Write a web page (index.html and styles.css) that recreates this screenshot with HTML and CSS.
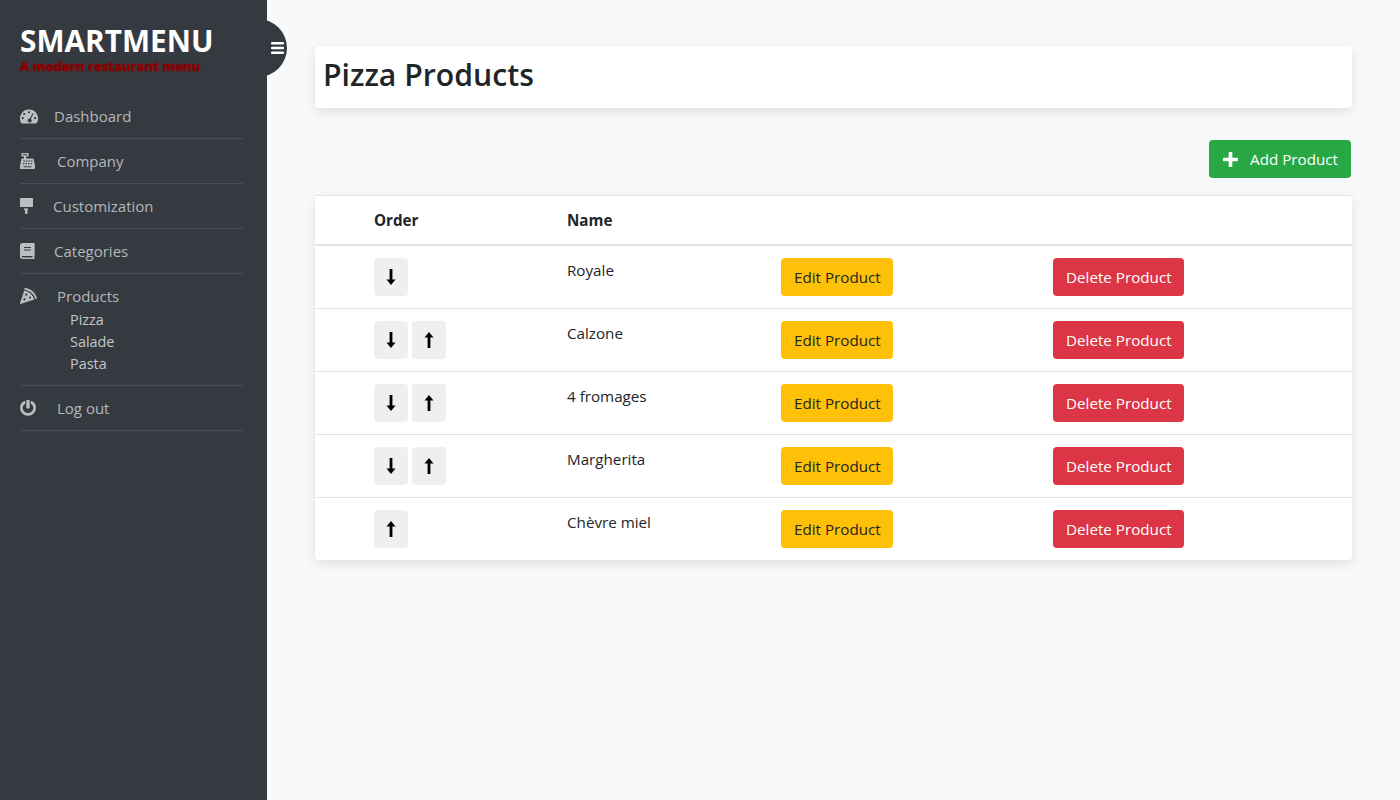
FILE: index.html
```html
<!DOCTYPE html>
<html lang="en">
<head>
    <meta charset="UTF-8">
    <meta name="viewport" content="width=device-width, initial-scale=1.0">
    <title>Pizza Products</title>
    <link rel="stylesheet" href="styles.css">
</head>
<body>
<div class="wrapper">
    <nav class="sidebar">
        <button class="sidebar-toggle">
            <svg class="toggle-icon" viewBox="0 0 13 12"><path d="M1 0h11a1 1 0 0 1 0 2.4H1A1 1 0 0 1 1 0zM1 4.8h11a1 1 0 0 1 0 2.4H1a1 1 0 0 1 0-2.4zM1 9.600h11a1 1 0 0 1 0 2.400H1a1 1 0 0 1 0-2.400z"/></svg>
        </button>
        <div class="brand">
            <h1>SMARTMENU</h1>
            <p>A modern restaurant menu</p>
        </div>
        <ul class="menu">
            <li>
                <a href="#">
                    <svg class="icon box-18" viewBox="0 0 18 16"><path fill-rule="evenodd" d="M9 1.500a9 9 0 0 0-7.800 13.500c.2.300.5.500.8.500h14c.3 0 .6-.2.800-.5A9 9 0 0 0 9 1.500zM9 3.200a1 1 0 1 1 0 2.100 1 1 0 0 1 0-2.100zM4.200 5a1 1 0 1 1 0 2.100 1 1 0 0 1 0-2.100zM2.800 9.100a1 1 0 1 1 0 2.100 1 1 0 0 1 0-2.100zM15.200 9.100a1 1 0 1 1 0 2.100 1 1 0 0 1 0-2.100zM12.600 5.200l.9.500-2.600 5.300a2 2 0 1 1-1-.4z"/></svg>
                    <span>Dashboard</span>
                </a>
            </li>
            <li>
                <a href="#">
                    <svg class="icon box-21" viewBox="0 0 21 16"><path fill-rule="evenodd" d="M1.500 0h7v3.500H6v2h6.500c.6 0 1.100.4 1.200 1l1.300 6.500v2c0 .6-.4 1-1 1H1c-.6 0-1-.4-1-1v-2L1.300 6.500c.1-.6.600-1 1.200-1H4v-2H1.500zM3 1.200v1h4v-1zM3.500 7.500v1.200h1.400V7.500zM6 7.500v1.200h1.400V7.500zM8.500 7.500v1.200h1.400V7.500zM11 7.500v1.200h1.400V7.500zM3 10v1.200h1.400V10zM5.500 10v1.200h1.400V10zM8 10v1.200h1.400V10zM10.500 10v1.200h1.400V10zM3.500 13.200v1h8v-1z"/></svg>
                    <span>Company</span>
                </a>
            </li>
            <li>
                <a href="#">
                    <svg class="icon box-17" viewBox="0 0 17 16"><path d="M1 0h11c.6 0 1 .4 1 1v7c0 .6-.4 1-1 1H1c-.6 0-1-.4-1-1V1c0-.6.4-1 1-1zM4 10.500h4v1.500H7.500v3c0 .6-.4 1-1 1h-.5c-.6 0-1-.4-1-1v-3H4z"/></svg>
                    <span>Customization</span>
                </a>
            </li>
            <li>
                <a href="#">
                    <svg class="icon box-18" viewBox="0 0 18 16"><path fill-rule="evenodd" d="M2.500 0H14c.4 0 .7.3.7.7v11.300c0 .3-.2.5-.4.600v2.200c.2.100.4.300.4.600v.3c0 .200-.2.300-.4.300H2.500A2.500 2.500 0 0 1 0 13.500v-11A2.500 2.500 0 0 1 2.500 0zM4 4v1h7V4zM4 6.500v1h7v-1zM2.400 13a1 1 0 0 0 0 1.600H12.500V13z"/></svg>
                    <span>Categories</span>
                </a>
            </li>
            <li>
                <a href="#">
                    <svg class="icon box-21" viewBox="0 0 21 16"><path fill-rule="evenodd" d="M4.800 0C10.500.3 15.500 4.500 16.800 10.100c.1.400-.1.700-.4.800l-.9.300C14.300 6.300 10.100 2.500 4.500 1.700l-.1-1.300c0-.2.200-.4.400-.4zM4.200 2.700c4.700.6 8.700 4 10.100 8.800L.6 15.900c-.4.100-.7-.2-.6-.6zM6.300 5.600a1.100 1.100 0 1 0 0 2.200 1.100 1.100 0 0 0 0-2.200zM10 8.400a1.100 1.100 0 1 0 0 2.200 1.100 1.100 0 0 0 0-2.200zM4.500 10.300a1.100 1.100 0 1 0 0 2.200 1.100 1.100 0 0 0 0-2.200z"/></svg>
                    <span>Products</span>
                </a>
                <ul class="submenu">
                    <li><a href="#">Pizza</a></li>
                    <li><a href="#">Salade</a></li>
                    <li><a href="#">Pasta</a></li>
                </ul>
            </li>
            <li>
                <a href="#">
                    <svg class="icon box-21" viewBox="0 0 21 16"><path d="M7 0h2c.4 0 .7.300.7.700v7.100c0 .4-.3.700-.7.700H7c-.4 0-.7-.3-.7-.7V.7C6.300.3 6.600 0 7 0zM11.500 1.100c3 1.100 4.500 3.700 4.500 6.700a8 8 0 0 1-16 0c0-3 1.500-5.600 4.500-6.700.4-.1.800.1.800.5v2c0 .2-.1.400-.3.500C3.500 5 2.700 6.300 2.700 7.800a5.300 5.300 0 0 0 10.600 0c0-1.500-.8-2.800-2.300-3.700-.2-.1-.3-.3-.3-.5v-2c0-.4.400-.6.800-.5z"/></svg>
                    <span>Log out</span>
                </a>
            </li>
        </ul>
    </nav>

    <main class="content">
        <div class="page-title">
            <h2>Pizza Products</h2>
        </div>
        <div class="actions">
            <a href="#" class="btn btn-success">
                <svg class="plus-icon" viewBox="0 0 14 14"><path d="M6 0h2c.4 0 .7.3.7.7v4.600h4.600c.4 0 .7.3.7.7v2c0 .4-.3.7-.7.7H8.700v4.600c0 .4-.3.7-.7.7H6c-.4 0-.7-.3-.7-.7V8.700H.7c-.4 0-.7-.3-.7-.7V6c0-.4.3-.7.7-.7h4.600V.7c0-.4.3-.7.7-.7z"/></svg>
                Add Product
            </a>
        </div>
        <div class="table-card">
            <table>
                <thead>
                    <tr>
                        <th class="col-id"></th>
                        <th class="col-order">Order</th>
                        <th class="col-name">Name</th>
                        <th class="col-edit"></th>
                        <th></th>
                    </tr>
                </thead>
                <tbody>
                    <tr>
                        <td></td>
                        <td>
                            <a href="#" class="btn-order"><svg class="arrow" viewBox="0 0 10 16"><path d="M3.600 0h2.800v10.600H9.500L5 16 .5 10.600h3.100z"/></svg></a>
                        </td>
                        <td>Royale</td>
                        <td><a href="#" class="btn btn-warning">Edit Product</a></td>
                        <td><a href="#" class="btn btn-danger">Delete Product</a></td>
                    </tr>
                    <tr>
                        <td></td>
                        <td>
                            <a href="#" class="btn-order"><svg class="arrow" viewBox="0 0 10 16"><path d="M3.600 0h2.800v10.600H9.500L5 16 .5 10.600h3.100z"/></svg></a>
                            <a href="#" class="btn-order"><svg class="arrow" viewBox="0 0 10 16"><path d="M3.600 16h2.800V5.400H9.500L5 0 .5 5.400h3.100z"/></svg></a>
                        </td>
                        <td>Calzone</td>
                        <td><a href="#" class="btn btn-warning">Edit Product</a></td>
                        <td><a href="#" class="btn btn-danger">Delete Product</a></td>
                    </tr>
                    <tr>
                        <td></td>
                        <td>
                            <a href="#" class="btn-order"><svg class="arrow" viewBox="0 0 10 16"><path d="M3.600 0h2.800v10.600H9.500L5 16 .5 10.600h3.100z"/></svg></a>
                            <a href="#" class="btn-order"><svg class="arrow" viewBox="0 0 10 16"><path d="M3.600 16h2.800V5.400H9.500L5 0 .5 5.400h3.100z"/></svg></a>
                        </td>
                        <td>4 fromages</td>
                        <td><a href="#" class="btn btn-warning">Edit Product</a></td>
                        <td><a href="#" class="btn btn-danger">Delete Product</a></td>
                    </tr>
                    <tr>
                        <td></td>
                        <td>
                            <a href="#" class="btn-order"><svg class="arrow" viewBox="0 0 10 16"><path d="M3.600 0h2.800v10.600H9.500L5 16 .5 10.600h3.100z"/></svg></a>
                            <a href="#" class="btn-order"><svg class="arrow" viewBox="0 0 10 16"><path d="M3.600 16h2.800V5.400H9.500L5 0 .5 5.400h3.100z"/></svg></a>
                        </td>
                        <td>Margherita</td>
                        <td><a href="#" class="btn btn-warning">Edit Product</a></td>
                        <td><a href="#" class="btn btn-danger">Delete Product</a></td>
                    </tr>
                    <tr>
                        <td></td>
                        <td>
                            <a href="#" class="btn-order"><svg class="arrow" viewBox="0 0 10 16"><path d="M3.600 16h2.800V5.400H9.500L5 0 .5 5.400h3.100z"/></svg></a>
                        </td>
                        <td>Chèvre miel</td>
                        <td><a href="#" class="btn btn-warning">Edit Product</a></td>
                        <td><a href="#" class="btn btn-danger">Delete Product</a></td>
                    </tr>
                </tbody>
            </table>
        </div>
    </main>
</div>
</body>
</html>
```

FILE: styles.css
```css
* { box-sizing: border-box; }
body {
    margin: 0;
    background-color: #f8f9fa;
    color: #212529;
    font-family: "Open Sans", "Noto Sans", sans-serif;
    font-size: 15.2px;
    line-height: 24px;
}
a { text-decoration: none; color: inherit; }

.wrapper {
    display: flex;
    min-height: 800px;
}

/* sidebar */
.sidebar {
    position: relative;
    flex: 0 0 267px;
    background-color: #343a40;
    padding: 20px 24px 0 20px;
    color: #b4b7b9;
    font-size: 15px;
}
.sidebar-toggle {
    position: absolute;
    top: 19px;
    left: 229px;
    width: 58px;
    height: 58px;
    padding: 0 3px 0 0;
    border: none;
    border-radius: 50%;
    background-color: #343a40;
    display: flex;
    align-items: center;
    justify-content: flex-end;
}
.toggle-icon { width: 13px; height: 12px; fill: #fff; }
.brand { height: 74px; padding-top: 4px; }
.brand h1 {
    margin: 0;
    color: #fff;
    font-size: 29.800px;
    font-weight: 700;
    line-height: 34px;
}
.brand p {
    margin: 0;
    color: #8b0000;
    font-size: 13.200px;
    font-weight: 700;
    line-height: 16px;
    text-shadow: 0 0 2px #8b0000;
}
.menu, .submenu { list-style: none; margin: 0; padding: 0; }
.menu > li {
    border-bottom: 1px solid #484e54;
    padding: 10px 0;
}
.menu > li > a {
    display: flex;
    align-items: center;
    gap: 16px;
}
.icon { height: 16px; fill: #bcbec0; flex: none; }
.box-17 { width: 17px; }
.box-18 { width: 18px; }
.box-21 { width: 21px; }
.submenu { padding: 1px 0 0 50px; }
.submenu li { line-height: 22px; color: #c4c6c8; font-size: 14.400px; }

/* main */
.content {
    flex: 1;
    padding: 46px 48px 0;
}
.page-title {
    background-color: #fff;
    border-radius: 4px;
    padding: 7px 8px;
    height: 62px;
    box-shadow: 0 4px 12px rgba(0, 0, 0, .1);
}
.page-title h2 {
    margin: 0;
    font-size: 30.200px;
    font-weight: 600;
    line-height: 44px;
}
.actions {
    display: flex;
    justify-content: flex-end;
    margin: 32px 1px 17px 0;
}
.btn {
    display: inline-flex;
    align-items: center;
    height: 38px;
    padding: 0 12.500px 0 13px;
    border-radius: 4px;
}
.btn-success { background-color: #28a745; color: #fff; padding: 0 13px 0 14px; }
.btn-warning { background-color: #ffc107; color: #212529; }
.btn-danger { background-color: #dc3545; color: #fff; }
.plus-icon { width: 15px; height: 15px; fill: #fff; margin-right: 12px; }

.table-card {
    background-color: #fff;
    border-top: 1px solid #e3e6ea;
    box-shadow: 0 4px 12px rgba(0, 0, 0, .1);
    border-radius: 0 0 4px 4px;
}
table {
    width: 100%;
    border-collapse: collapse;
    table-layout: fixed;
}
th, td {
    padding: 12px;
    text-align: left;
    vertical-align: top;
}
th {
    padding-bottom: 11px;
    font-weight: 700;
    border-bottom: 2px solid #dee2e6;
    height: 49px;
}
tbody tr + tr td { border-top: 1px solid #dee2e6; }
.col-id { width: 47px; }
.col-order { width: 193px; }
.col-name { width: 214px; }
.col-edit { width: 272px; }
.btn-order {
    display: inline-flex;
    align-items: center;
    justify-content: center;
    width: 34px;
    height: 38px;
    background-color: #efefef;
    border-radius: 4px;
    vertical-align: top;
}
.arrow { width: 10px; height: 16px; fill: #000; }
```
